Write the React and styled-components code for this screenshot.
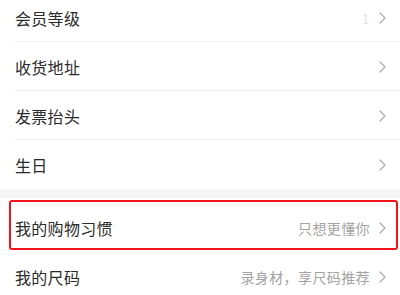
import React from 'react';
import styled, { createGlobalStyle } from 'styled-components';

const GlobalStyle = createGlobalStyle`
    html, body {
        margin: 0;
        padding: 0;
        background: #ffffff;
        overflow: hidden;
    }
    body {
        font-family: "Noto Sans CJK SC", "Noto Sans", sans-serif;
    }
`;

const Page = styled.div`
    width: 400px;
    height: 295px;
    overflow: hidden;
    background: #ffffff;
`;

const Group = styled.div`
    display: flex;
    flex-direction: column;
    margin-top: ${p => p.$offset || 0}px;
`;

const Row = styled.div`
    position: relative;
    display: flex;
    align-items: center;
    justify-content: space-between;
    height: ${p => p.$height || 49}px;
    padding: ${p => p.$padTop || 0}px 14px 0 15px;
    box-sizing: border-box;

    &::after {
        content: "";
        display: ${p => (p.$divider ? 'block' : 'none')};
        position: absolute;
        left: 15px;
        right: 0;
        bottom: 0;
        height: 1px;
        background: #f0f0f0;
    }
`;

const Label = styled.span`
    font-size: 16px;
    color: #2b2b2b;
    letter-spacing: 0.3px;
`;

const Right = styled.div`
    display: flex;
    align-items: center;
    gap: 9px;
`;

const Hint = styled.span`
    font-size: 14px;
    color: ${p => (p.$faint ? '#e4e4e4' : '#a3a3a3')};
    letter-spacing: 0.4px;
`;

const Spacer = styled.div`
    height: 9px;
    background: #f5f5f5;
`;

const Highlight = styled.div`
    position: absolute;
    top: 2px;
    left: 9px;
    right: 2px;
    height: 50px;
    border: 2px solid #f2141b;
    border-radius: 3px;
    box-sizing: border-box;
    pointer-events: none;
`;

function Chevron() {
    return (
        <svg width="7" height="12" viewBox="0 0 7 12" fill="none">
            <path d="M1 1l5 5-5 5" stroke="#ababab" strokeWidth="1.3" strokeLinecap="round" strokeLinejoin="round" />
        </svg>
    );
}

function Item({ label, hint, faint, divider, height, padTop, children }) {
    return (
        <Row $divider={divider} $height={height} $padTop={padTop}>
            {children}
            <Label>{label}</Label>
            <Right>
                {hint && <Hint $faint={faint}>{hint}</Hint>}
                <Chevron />
            </Right>
        </Row>
    );
}

export default function App() {
    return (
        <Page>
            <GlobalStyle />
            <Group $offset={-7}>
                <Item label="会员等级" hint="1" faint divider />
                <Item label="收货地址" divider />
                <Item label="发票抬头" divider />
                <Item label="生日" />
            </Group>
            <Spacer />
            <Group>
                <Item label="我的购物习惯" hint="只想更懂你" height={54} padTop={5}>
                    <Highlight />
                </Item>
                <Item label="我的尺码" hint="录身材，享尺码推荐" />
            </Group>
        </Page>
    );
}
